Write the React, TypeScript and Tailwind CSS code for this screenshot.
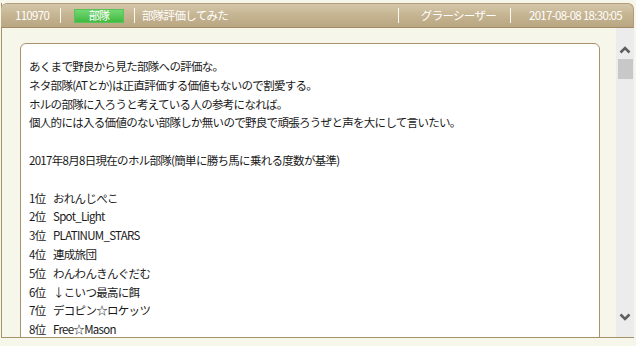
import React from "react";

const lines: string[] = [
  "あくまで野良から見た部隊への評価な。",
  "ネタ部隊(ATとか)は正直評価する価値もないので割愛する。",
  "ホルの部隊に入ろうと考えている人の参考になれば。",
  "個人的には入る価値のない部隊しか無いので野良で頑張ろうぜと声を大にして言いたい。",
  "",
  "2017年8月8日現在のホル部隊(簡単に勝ち馬に乗れる度数が基準)",
  "",
];

const ranks: [string, string][] = [
  ["1位", "おれんじぺこ"],
  ["2位", "Spot_Light"],
  ["3位", "PLATINUM_STARS"],
  ["4位", "連成旅団"],
  ["5位", "わんわんきんぐだむ"],
  ["6位", "↓こいつ最高に餌"],
  ["7位", "デコピン☆ロケッツ"],
  ["8位", "Free☆Mason"],
];

function Sep() {
  return <div className="w-px h-[15px] bg-[#fbf8f0] shrink-0" />;
}

export default function App() {
  return (
    <div
      className="w-[636px] h-[346px] bg-[#f7f6ea] pt-[3px] pl-[1px] pr-[2px] overflow-hidden"
      style={{ fontFamily: '"Noto Sans CJK JP", "Noto Sans", sans-serif' }}
    >
      <div className="flex flex-col h-[335px] border-l border-b border-[#a8926c]">
        {/* header */}
        <div className="h-[25px] shrink-0 flex items-center rounded-t-[6px] border-t border-r border-[#b19d7a] border-b border-b-[#a48b63] bg-gradient-to-b from-[#d4c7aa] via-[#c5b491] to-[#b9a683] text-white text-[11.5px] tracking-[-0.7px] -ml-px">
          <span className="ml-[14px] w-[35px]">110970</span>
          <div className="ml-[10px]"><Sep /></div>
          <div className="ml-[13px] w-[50px] h-[14px] flex items-center justify-center border border-[#58c458] bg-gradient-to-b from-[#72d872] to-[#3fba3f] text-[11px] text-white leading-none">
            部隊
          </div>
          <div className="ml-[10px]"><Sep /></div>
          <span className="ml-[7px]">部隊評価してみた</span>
          <div className="ml-auto"><Sep /></div>
          <span className="ml-[22px]">グラーシーザー</span>
          <div className="ml-[14px]"><Sep /></div>
          <span className="ml-[18px] mr-[11px]">2017-08-08 18:30:05</span>
        </div>
        {/* body */}
        <div className="flex flex-1 min-h-0">
          <div className="flex-1 overflow-hidden pl-[18px] pr-[16px] pt-[15px]">
            <div className="bg-white border border-[#a8926c] rounded-t-[6px] pt-[13px] pl-[8px] pb-[40px] text-[11.5px] tracking-[-0.7px] leading-[18.8px] text-[#1a1a1a]">
              {lines.map((l, i) => (
                <div key={i} className="h-[18.8px] whitespace-nowrap">{l}</div>
              ))}
              {ranks.map(([r, n]) => (
                <div key={r} className="h-[18.8px] whitespace-nowrap flex">
                  <span className="w-[24px]">{r}</span>
                  <span>{n}</span>
                </div>
              ))}
            </div>
          </div>
          {/* scrollbar */}
          <div className="w-[18px] shrink-0 bg-[#ececec] flex flex-col items-center">
            <svg width="12" height="8" viewBox="0 0 12 8" className="mt-[18px]">
              <polyline points="1.5,6.5 6,2 10.5,6.5" fill="none" stroke="#5f5f5f" strokeWidth="2.6" />
            </svg>
            <div className="mt-[5px] w-[15px] h-[20px] bg-[#c8c8c8]" />
            <div className="flex-1" />
            <svg width="12" height="8" viewBox="0 0 12 8" className="mb-[16px]">
              <polyline points="1.5,1.5 6,6 10.5,1.5" fill="none" stroke="#5f5f5f" strokeWidth="2.6" />
            </svg>
          </div>
        </div>
      </div>
    </div>
  );
}
